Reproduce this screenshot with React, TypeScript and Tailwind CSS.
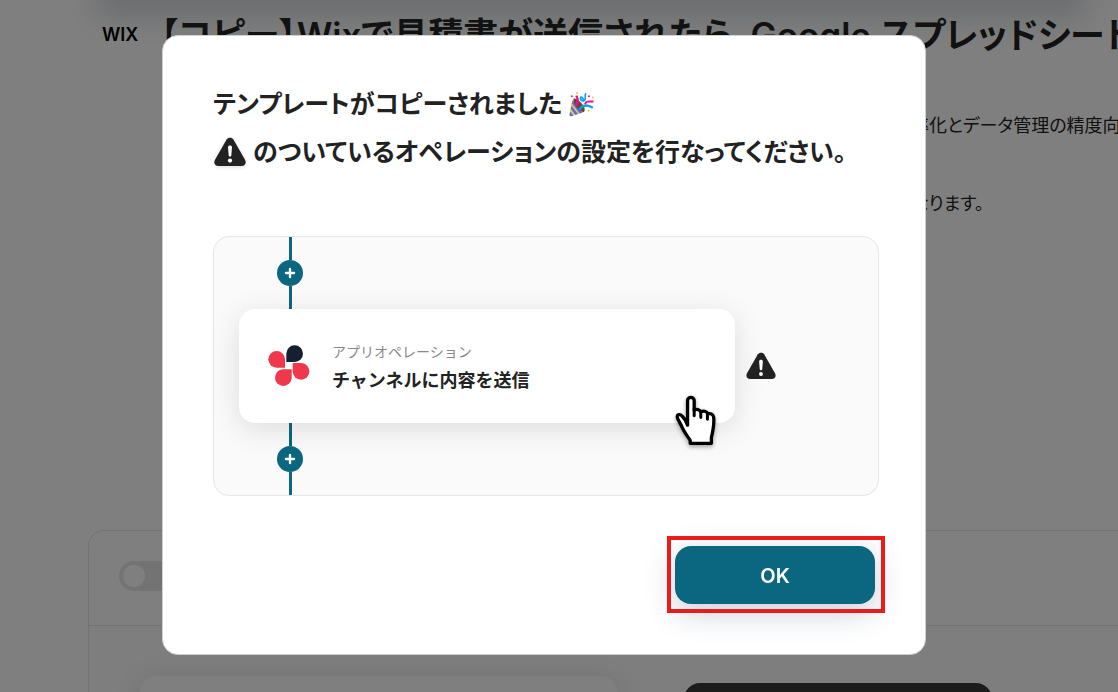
import { Plus } from "lucide-react";
import type { ReactNode } from "react";

function WarningIcon({ className }: { className?: string }) {
  return (
    <svg viewBox="0 0 32 30" className={className} aria-hidden="true">
      <path
        d="M12.6 2.4C14 0.1 18 0.1 19.4 2.4L31 22.8C32.6 26 31 29 27.6 29H4.4C1 29 -0.6 26 1 22.8Z"
        fill="#222222"
      />
      <path d="M14 10.2C14 7.8 18 7.8 18 10.2L17.3 18.6C17.1 20 14.9 20 14.7 18.6Z" fill="#ffffff" />
      <circle cx="16" cy="23.6" r="2.1" fill="#ffffff" />
    </svg>
  );
}

function PartyIcon() {
  return (
    <svg viewBox="0 0 78 76" className="h-[25px] w-[26px]" aria-hidden="true">
      <path d="M17 20C9 24 6 62 4 71C4 74 6 75 9 74L48 61C52 55 28 20 17 20Z" fill="#f9c23c" />
      <path d="M14 26L43 62L35 65L11 34ZM10 42L30 67L22 70L8 51ZM6 59L16 72L9 74L4 71Z" fill="#4f6ff5" />
      <path d="M17 20C29 18 57 47 49 59C43 68 11 38 17 20Z" fill="#6d4534" />
      <path d="M24 42C30 35 31 24 25 11" stroke="#f70a8d" strokeWidth="7" fill="none" />
      <path d="M34 53C44 40 57 36 75 48" stroke="#00a6ed" strokeWidth="7" fill="none" />
      <path d="M54 4C48 12 55 15 51 24C45 30 35 25 38 16C42 15 46 18 47 27" stroke="#00a6ed" strokeWidth="5" fill="none" />
      <path d="M51 37C56 26 63 29 77 29" stroke="#f70a8d" strokeWidth="6" fill="none" />
      <circle cx="11" cy="13" r="3" fill="#f70a8d" />
      <circle cx="63" cy="13" r="3" fill="#f70a8d" />
      <circle cx="27" cy="3" r="3" fill="#f9c23c" />
      <circle cx="75" cy="17" r="3" fill="#f9c23c" />
      <circle cx="62" cy="57" r="3" fill="#f9c23c" />
    </svg>
  );
}

function AppLogo() {
  return (
    <svg viewBox="24 30 126 126" className="size-[42px] shrink-0" aria-hidden="true">
      <path d="M79 81V56A25 25 0 1 1 104 81Z" fill="#142030" />
      <path d="M75 98H50A25 25 0 1 1 75 73Z" fill="#f0374b" />
      <path d="M95 103V128A25 25 0 1 1 70 103Z" fill="#f0374b" />
      <path d="M98 84H123A25 25 0 1 1 98 109Z" fill="#f0374b" />
    </svg>
  );
}

function HandCursor() {
  return (
    <svg
      viewBox="46 30 122 154"
      className="absolute -bottom-[23px] right-[19px] h-[51px] w-[41px] drop-shadow-[0_2px_2px_rgba(0,0,0,0.35)]"
      aria-hidden="true"
    >
      <path
        d="M83 121V47C83 34 103 34 103 47V76C110 72 120 73 123 81C131 76 141 79 144 87C153 84 161 89 162 98C164 121 159 141 155 158V176H91V167C82 153 71 140 65 124L54 103C47 89 59 85 68 95C76 103 80 112 83 121Z"
        fill="#ffffff"
        stroke="#000000"
        strokeWidth="10"
        strokeLinejoin="round"
      />
      <path d="M103 72V93M123 80V98M143 86V103" stroke="#000000" strokeWidth="9" strokeLinecap="round" />
    </svg>
  );
}

function Connector() {
  return (
    <div className="ml-[63px] flex h-[72px] w-[26px] flex-col items-center">
      <span className="w-[3px] flex-1 bg-[#0b6780]" />
      <button
        type="button"
        aria-label="追加"
        className="flex size-[26px] items-center justify-center rounded-full bg-[#0b6780] text-white"
      >
        <Plus className="size-[14px]" strokeWidth={4} />
      </button>
      <span className="w-[3px] flex-1 bg-[#0b6780]" />
    </div>
  );
}

function BackgroundPage() {
  return (
    <div className="h-screen overflow-hidden bg-white">
      <div className="absolute -top-10 left-[104px] right-[40px] h-10 shadow-[0_10px_30px_8px_rgba(70,80,95,0.22)]" />
      <header className="flex h-[70px] items-center gap-[22px] whitespace-nowrap pl-[102px]">
        <span className="font-['Inter'] text-lg font-semibold text-black">WIX</span>
        <h1 className="text-[35px] font-semibold">
          【コピー】Wixで見積書が送信されたら、Google スプレッドシート
        </h1>
      </header>
      <div className="whitespace-nowrap pl-[911px] pt-[43px] text-lg leading-[26px]">
        <p>率化とデータ管理の精度向</p>
        <p className="pt-[52px]">なります。</p>
      </div>
      <section className="ml-[88px] mt-[313px] rounded-tl-2xl border-l border-t border-[#e6e6e6]">
        <div className="flex h-[95px] items-center border-b border-[#e6e6e6] pb-1 pl-[30px]">
          <button
            type="button"
            role="switch"
            aria-checked="false"
            aria-label="有効"
            className="h-[30px] w-16 rounded-full bg-[#e6e6e6] p-1"
          >
            <span className="block size-[22px] rounded-full bg-white" />
          </button>
        </div>
        <div className="flex items-start gap-[67px] bg-[#fcfcfc] pl-[51px] pt-[50px]">
          <div className="h-24 w-[477px] rounded-2xl bg-white shadow-[0_4px_30px_rgba(0,0,0,0.1)]" />
          <div className="mt-[7px] h-24 w-[308px] rounded-2xl bg-[#383838]" />
        </div>
      </section>
    </div>
  );
}

function Dialog({ children }: { children: ReactNode }) {
  return (
    <div className="fixed inset-0 flex items-start bg-black/50 pl-[162px] pr-[192px] pt-[35px]">
      <div
        role="dialog"
        aria-modal="true"
        aria-labelledby="dialog-title"
        className="min-w-0 flex-1 rounded-2xl border border-[#d0d0d0] bg-white pb-[50px] pl-[50px] pr-[46px] pt-11"
      >
        {children}
      </div>
    </div>
  );
}

export default function App() {
  return (
    <div className="font-['Inter','Noto_Sans_CJK_JP',sans-serif] text-[#222222] [font-feature-settings:'palt']" lang="ja">
      <BackgroundPage />
      <Dialog>
        <h2 id="dialog-title" className="whitespace-nowrap text-[25px] font-semibold leading-[48px]">
          <span className="flex items-center gap-1.5">
            テンプレートがコピーされました
            <PartyIcon />
          </span>
          <span className="flex items-center gap-1.5">
            <WarningIcon className="h-[30px] w-[34px] drop-shadow-sm" />
            のついているオペレーションの設定を行なってください。
          </span>
        </h2>

        <div className="mt-[60px] rounded-2xl border border-[#e6e6e6] bg-[#fafafa]">
          <Connector />
          <div className="flex items-center gap-[11px] pl-[25px] pr-[102px]">
            <div className="relative flex h-[114px] flex-1 items-center gap-[22px] rounded-2xl bg-white pl-[29px] shadow-[0_6px_30px_rgba(0,0,0,0.12)]">
              <AppLogo />
              <div className="pt-1 [font-feature-settings:normal]">
                <p className="text-sm leading-[26px] text-[#888888]">アプリオペレーション</p>
                <p className="text-lg font-semibold leading-8">チャンネルに内容を送信</p>
              </div>
              <HandCursor />
            </div>
            <WarningIcon className="h-7 w-[30px] shrink-0" />
          </div>
          <Connector />
        </div>

        <div className="mr-1 mt-[50px] flex justify-end">
          <div className="relative">
            <button
              type="button"
              className="block h-[58px] w-[200px] rounded-2xl bg-[#0b6780] pt-[2px] text-xl font-semibold text-white shadow-[0_8px_30px_rgba(40,60,90,0.25)]"
            >
              OK
            </button>
            <span className="pointer-events-none absolute -bottom-[9px] -left-2 -right-[10px] -top-[10px] border-4 border-[#e81c1c]" />
          </div>
        </div>
      </Dialog>
    </div>
  );
}
